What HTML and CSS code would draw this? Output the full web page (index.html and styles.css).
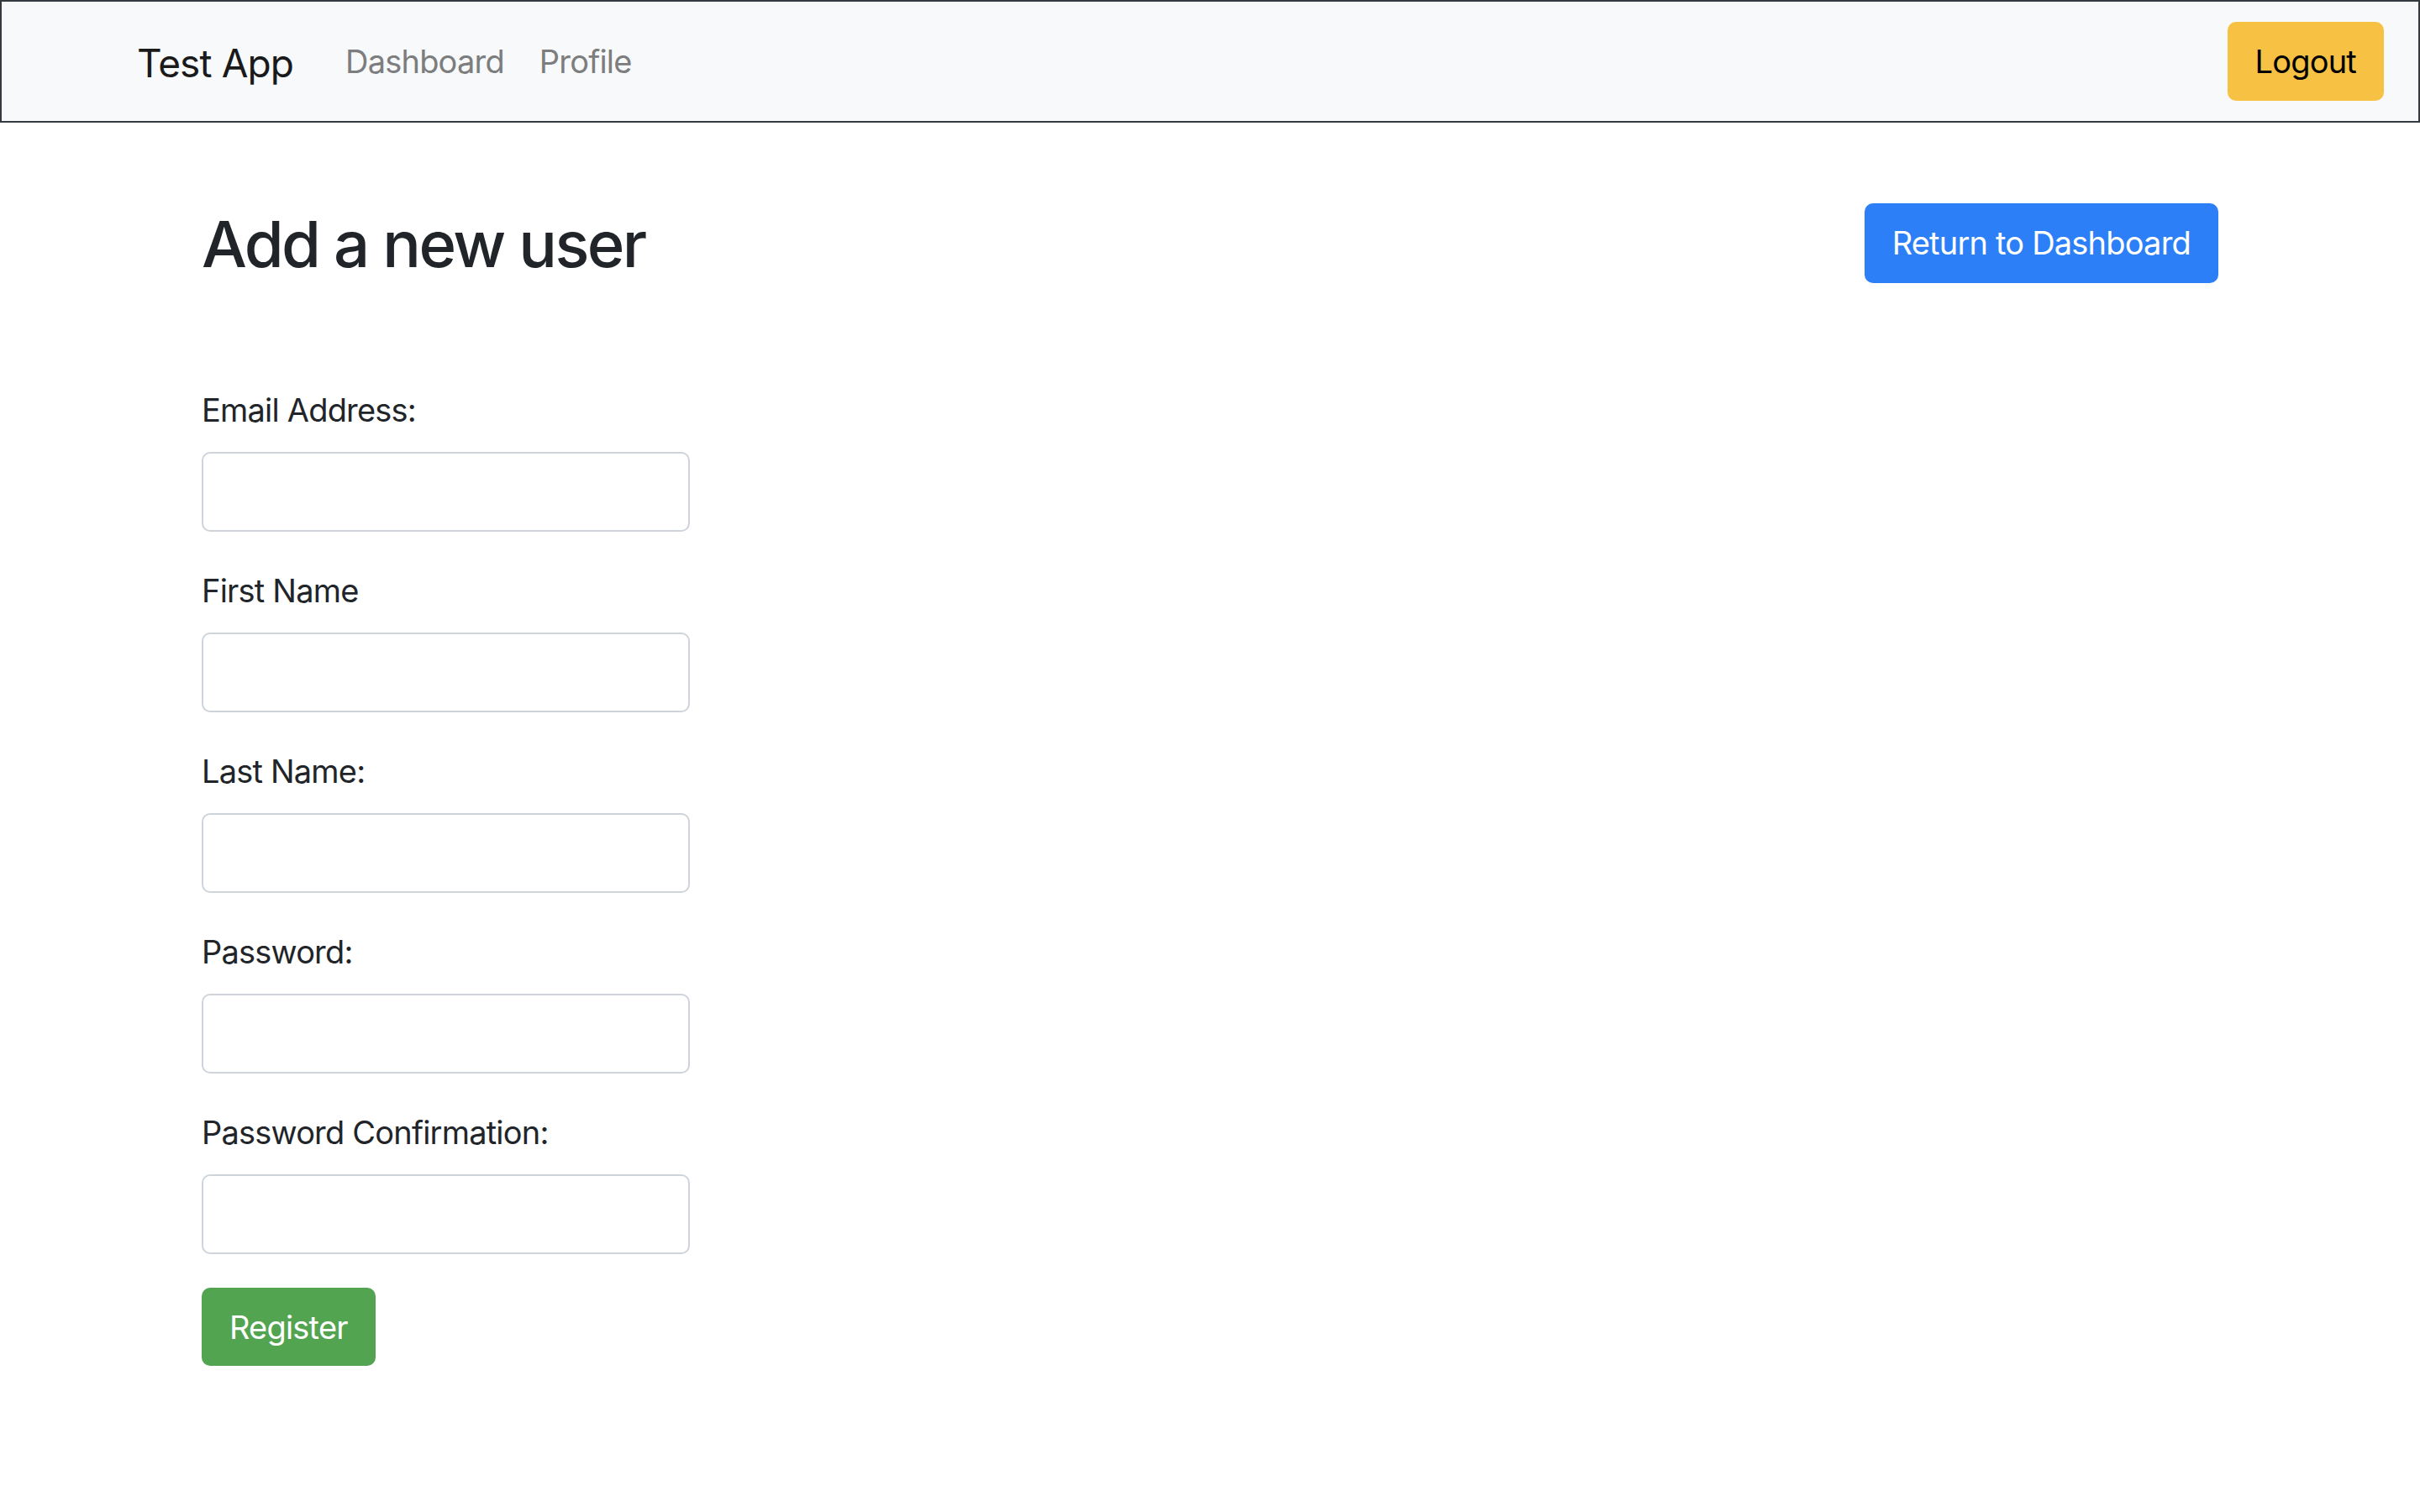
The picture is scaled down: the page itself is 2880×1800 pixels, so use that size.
FILE: index.html
```html
<!DOCTYPE html>
<html lang="en">
<head>
<meta charset="utf-8">
<title>Test App</title>
<link rel="stylesheet" href="styles.css">
</head>
<body>
<nav class="navbar">
  <a class="brand" href="#">Test App</a>
  <ul class="nav-links">
    <li><a class="nav-link" href="#">Dashboard</a></li>
    <li><a class="nav-link" href="#">Profile</a></li>
  </ul>
  <button class="btn btn-warning" type="button">Logout</button>
</nav>
<main class="container">
  <div class="page-header">
    <h1 class="title">Add a new user</h1>
    <a class="btn btn-primary" href="#">Return to Dashboard</a>
  </div>
  <form class="user-form">
    <div class="form-group">
      <label class="form-label" for="email">Email Address:</label>
      <input class="form-control" id="email" type="email">
    </div>
    <div class="form-group">
      <label class="form-label" for="first">First Name</label>
      <input class="form-control" id="first" type="text">
    </div>
    <div class="form-group">
      <label class="form-label" for="last">Last Name:</label>
      <input class="form-control" id="last" type="text">
    </div>
    <div class="form-group">
      <label class="form-label" for="pw">Password:</label>
      <input class="form-control" id="pw" type="password">
    </div>
    <div class="form-group">
      <label class="form-label" for="pwc">Password Confirmation:</label>
      <input class="form-control" id="pwc" type="password">
    </div>
    <button class="btn btn-success" type="submit">Register</button>
  </form>
</main>
</body>
</html>
```

FILE: styles.css
```css
* {
  box-sizing: border-box;
}

html, body {
  margin: 0;
  padding: 0;
  background: #ffffff;
}

body {
  font-family: Inter, "Noto Sans", Roboto, sans-serif;
  font-size: 38px;
  letter-spacing: -0.8px;
  color: #212529;
}

.navbar {
  display: flex;
  align-items: center;
  height: 146px;
  padding: 0 41px 0 161px;
  background: #f8f9fa;
  border: 2px solid #343a40;
}

.brand {
  font-size: 46px;
  letter-spacing: -0.9px;
  color: #1a1a1a;
  text-decoration: none;
  margin-right: 41px;
  line-height: 1;
  padding-top: 4px;
}

.nav-links {
  display: flex;
  list-style: none;
  margin: 0;
  padding: 0;
  flex: 1;
}

.nav-link {
  display: block;
  padding: 0 21px;
  font-size: 38px;
  color: #7c7d7e;
  text-decoration: none;
  line-height: 1;
  margin-top: -1px;
}

.btn {
  display: inline-flex;
  align-items: center;
  justify-content: center;
  height: 94px;
  padding: 0 33px;
  border: 0;
  border-radius: 10px;
  font-family: inherit;
  font-size: 38px;
  letter-spacing: -0.8px;
  line-height: 1;
  text-decoration: none;
  cursor: pointer;
}

.btn-warning {
  background: #f7c244;
  color: #000000;
}

.btn-primary {
  background: #2c7ff7;
  color: #ffffff;
  height: 95px;
}

.btn-success {
  background: #53a450;
  color: #ffffff;
  height: 93px;
}

.container {
  width: 2400px;
  margin: 0 auto;
  padding-top: 94px;
}

.page-header {
  display: flex;
  justify-content: space-between;
  align-items: center;
  margin-bottom: 120px;
}

.title {
  margin: 0;
  font-size: 76px;
  font-weight: 500;
  letter-spacing: -2.6px;
  line-height: 96px;
  padding-top: 2px;
  color: #212529;
}

.user-form {
  display: flex;
  flex-direction: column;
  align-items: flex-start;
}

.form-group {
  display: flex;
  flex-direction: column;
  margin-bottom: 40px;
}

.form-label {
  line-height: 60px;
  margin-bottom: 20px;
  color: #212529;
}

.form-control {
  width: 581px;
  height: 95px;
  border: 2px solid #ced4da;
  border-radius: 10px;
  background: #ffffff;
  font-family: inherit;
  font-size: 38px;
  padding: 0 30px;
}
```
